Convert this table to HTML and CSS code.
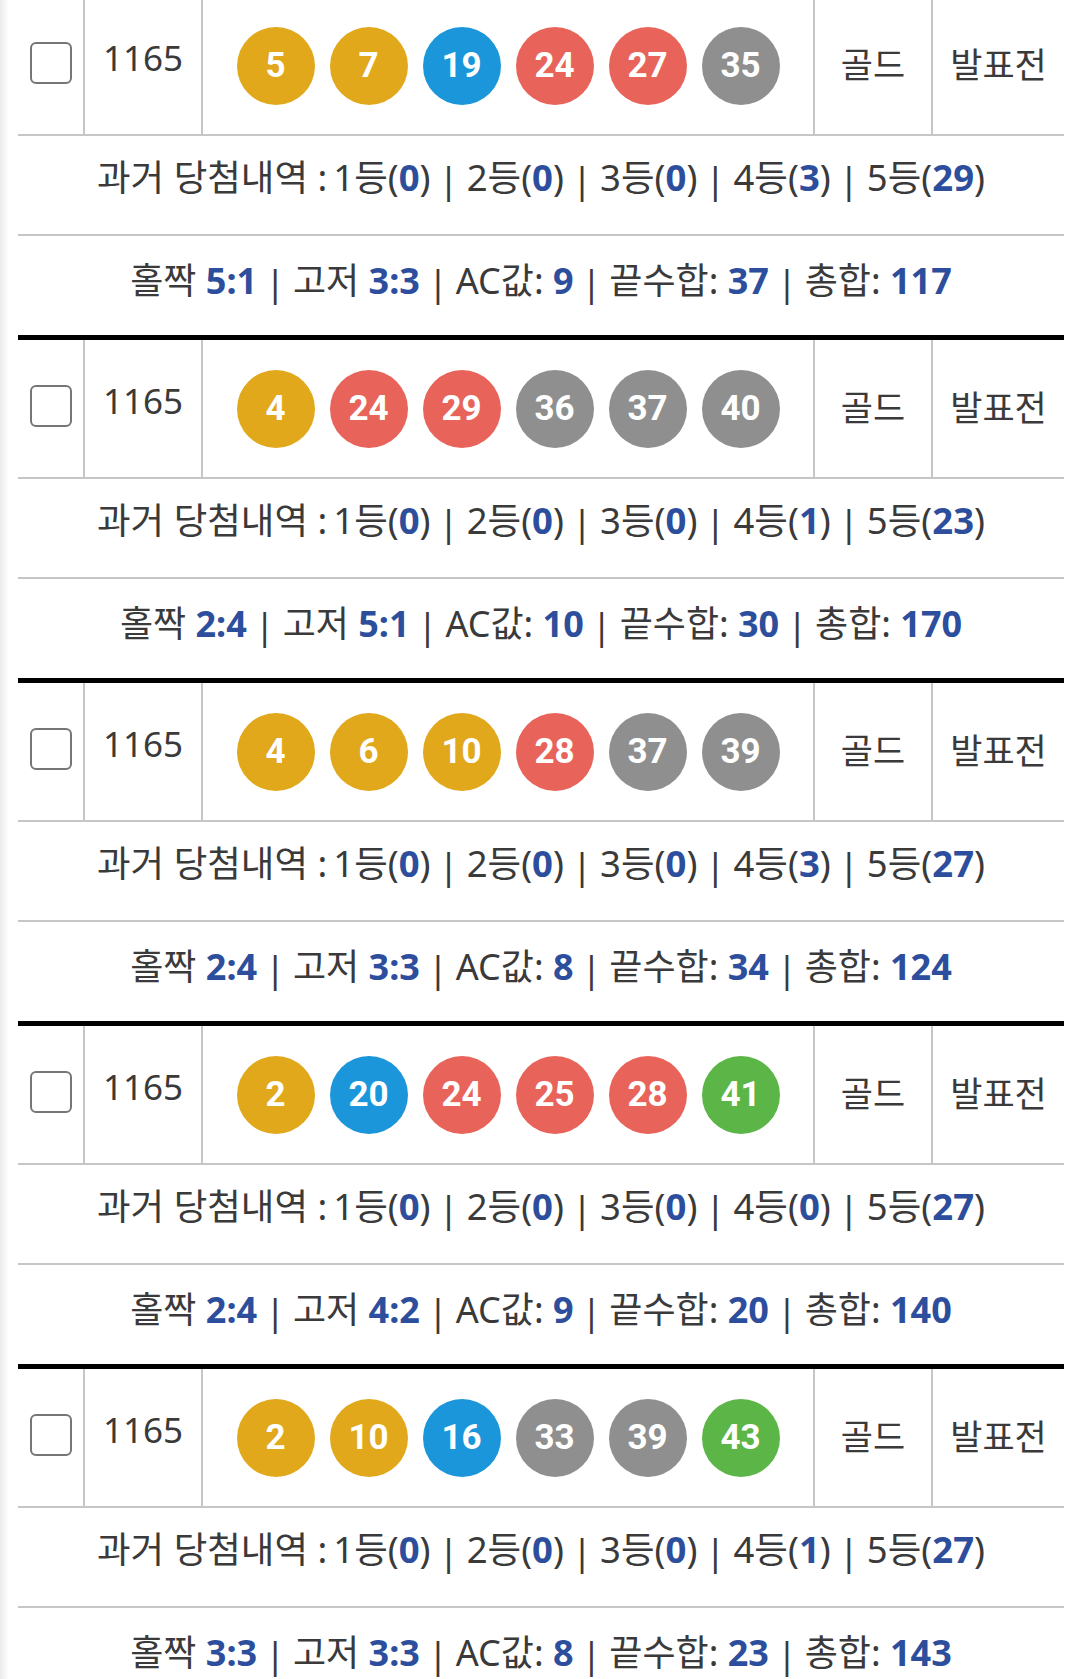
FILE: index.html
```html
<!DOCTYPE html>
<html lang="ko">
<head>
  <meta charset="UTF-8" />
  <meta name="viewport" content="width=device-width, initial-scale=1.0"/>
  <title>조합 목록</title>
  <link rel="stylesheet" href="styles.css">
</head>
<body>
  <div class="combo-list">

    <div class="combo">
      <div class="main-row">
        <div class="cell cell-check"><input type="checkbox" class="pick" /></div>
        <div class="cell cell-round">1165</div>
        <div class="cell cell-balls">
          <span class="ball yellow">5</span>
          <span class="ball yellow">7</span>
          <span class="ball blue">19</span>
          <span class="ball red">24</span>
          <span class="ball red">27</span>
          <span class="ball grey">35</span>
        </div>
        <div class="cell cell-grade"><span>골드</span></div>
        <div class="cell cell-status"><span>발표전</span></div>
      </div>
      <div class="info-row history"><p>과거 당첨내역 :&thinsp;1등(<b>0</b>)<span class="sep">|</span>2등(<b>0</b>)<span class="sep">|</span>3등(<b>0</b>)<span class="sep">|</span>4등(<b>3</b>)<span class="sep">|</span>5등(<b>29</b>)</p></div>
      <div class="info-row stats"><p>홀짝 <b>5:1</b><span class="sep">|</span>고저 <b>3:3</b><span class="sep">|</span>AC값: <b>9</b><span class="sep">|</span>끝수합: <b>37</b><span class="sep">|</span>총합: <b>117</b></p></div>
    </div>

    <div class="combo">
      <div class="main-row">
        <div class="cell cell-check"><input type="checkbox" class="pick" /></div>
        <div class="cell cell-round">1165</div>
        <div class="cell cell-balls">
          <span class="ball yellow">4</span>
          <span class="ball red">24</span>
          <span class="ball red">29</span>
          <span class="ball grey">36</span>
          <span class="ball grey">37</span>
          <span class="ball grey">40</span>
        </div>
        <div class="cell cell-grade"><span>골드</span></div>
        <div class="cell cell-status"><span>발표전</span></div>
      </div>
      <div class="info-row history"><p>과거 당첨내역 :&thinsp;1등(<b>0</b>)<span class="sep">|</span>2등(<b>0</b>)<span class="sep">|</span>3등(<b>0</b>)<span class="sep">|</span>4등(<b>1</b>)<span class="sep">|</span>5등(<b>23</b>)</p></div>
      <div class="info-row stats"><p>홀짝 <b>2:4</b><span class="sep">|</span>고저 <b>5:1</b><span class="sep">|</span>AC값: <b>10</b><span class="sep">|</span>끝수합: <b>30</b><span class="sep">|</span>총합: <b>170</b></p></div>
    </div>

    <div class="combo">
      <div class="main-row">
        <div class="cell cell-check"><input type="checkbox" class="pick" /></div>
        <div class="cell cell-round">1165</div>
        <div class="cell cell-balls">
          <span class="ball yellow">4</span>
          <span class="ball yellow">6</span>
          <span class="ball yellow">10</span>
          <span class="ball red">28</span>
          <span class="ball grey">37</span>
          <span class="ball grey">39</span>
        </div>
        <div class="cell cell-grade"><span>골드</span></div>
        <div class="cell cell-status"><span>발표전</span></div>
      </div>
      <div class="info-row history"><p>과거 당첨내역 :&thinsp;1등(<b>0</b>)<span class="sep">|</span>2등(<b>0</b>)<span class="sep">|</span>3등(<b>0</b>)<span class="sep">|</span>4등(<b>3</b>)<span class="sep">|</span>5등(<b>27</b>)</p></div>
      <div class="info-row stats"><p>홀짝 <b>2:4</b><span class="sep">|</span>고저 <b>3:3</b><span class="sep">|</span>AC값: <b>8</b><span class="sep">|</span>끝수합: <b>34</b><span class="sep">|</span>총합: <b>124</b></p></div>
    </div>

    <div class="combo">
      <div class="main-row">
        <div class="cell cell-check"><input type="checkbox" class="pick" /></div>
        <div class="cell cell-round">1165</div>
        <div class="cell cell-balls">
          <span class="ball yellow">2</span>
          <span class="ball blue">20</span>
          <span class="ball red">24</span>
          <span class="ball red">25</span>
          <span class="ball red">28</span>
          <span class="ball green">41</span>
        </div>
        <div class="cell cell-grade"><span>골드</span></div>
        <div class="cell cell-status"><span>발표전</span></div>
      </div>
      <div class="info-row history"><p>과거 당첨내역 :&thinsp;1등(<b>0</b>)<span class="sep">|</span>2등(<b>0</b>)<span class="sep">|</span>3등(<b>0</b>)<span class="sep">|</span>4등(<b>0</b>)<span class="sep">|</span>5등(<b>27</b>)</p></div>
      <div class="info-row stats"><p>홀짝 <b>2:4</b><span class="sep">|</span>고저 <b>4:2</b><span class="sep">|</span>AC값: <b>9</b><span class="sep">|</span>끝수합: <b>20</b><span class="sep">|</span>총합: <b>140</b></p></div>
    </div>

    <div class="combo">
      <div class="main-row">
        <div class="cell cell-check"><input type="checkbox" class="pick" /></div>
        <div class="cell cell-round">1165</div>
        <div class="cell cell-balls">
          <span class="ball yellow">2</span>
          <span class="ball yellow">10</span>
          <span class="ball blue">16</span>
          <span class="ball grey">33</span>
          <span class="ball grey">39</span>
          <span class="ball green">43</span>
        </div>
        <div class="cell cell-grade"><span>골드</span></div>
        <div class="cell cell-status"><span>발표전</span></div>
      </div>
      <div class="info-row history"><p>과거 당첨내역 :&thinsp;1등(<b>0</b>)<span class="sep">|</span>2등(<b>0</b>)<span class="sep">|</span>3등(<b>0</b>)<span class="sep">|</span>4등(<b>1</b>)<span class="sep">|</span>5등(<b>27</b>)</p></div>
      <div class="info-row stats"><p>홀짝 <b>3:3</b><span class="sep">|</span>고저 <b>3:3</b><span class="sep">|</span>AC값: <b>8</b><span class="sep">|</span>끝수합: <b>23</b><span class="sep">|</span>총합: <b>143</b></p></div>
    </div>

  </div>
</body>
</html>
```

FILE: styles.css
```css
* {
  box-sizing: border-box;
}

body {
  margin: 0;
  font-family: 'Noto Sans', 'Noto Sans CJK KR', sans-serif;
  color: #3a3a3a;
  background: linear-gradient(to right, #ebebeb 0, #ffffff 9px);
  min-height: 100vh;
  overflow: hidden;
}

.combo-list {
  margin: -3px 16px 0 18px;
}

.combo {
  border-top: 5px solid #000;
  background-color: #fff;
}

.combo:first-child {
  border-top: none;
}

/* top row: checkbox, round, balls, grade, status */
.main-row {
  display: grid;
  grid-template-columns: 65px 118px 612px 118px 1fr;
  height: 139px;
  border-bottom: 2px solid #c6c6c6;
}

.cell {
  display: flex;
  align-items: center;
  justify-content: center;
  border-left: 2px solid #c6c6c6;
  font-size: 35px;
}

.cell-check {
  border-left: none;
}

.pick {
  appearance: none;
  -webkit-appearance: none;
  width: 42px;
  height: 42px;
  margin: 0 0 6px 0;
  border: 2px solid #767676;
  border-radius: 6px;
  background: #fff;
}

.cell-round {
  padding-bottom: 16px;
}

.cell-grade,
.cell-status {
  padding-bottom: 6px;
}

.cell-balls {
  gap: 15px;
}

.ball {
  width: 78px;
  height: 78px;
  border-radius: 50%;
  display: flex;
  align-items: center;
  justify-content: center;
  color: #fff;
  font-family: Roboto, 'Noto Sans', sans-serif;
  font-weight: 700;
  font-size: 35px;
}

.yellow { background-color: #e2a81c; }
.blue   { background-color: #1c96da; }
.red    { background-color: #e8645a; }
.grey   { background-color: #8f8f8f; }
.green  { background-color: #5cb547; }

/* history + stats lines */
.info-row {
  display: flex;
  align-items: center;
  justify-content: center;
  font-size: 36px;
  white-space: nowrap;
  padding-bottom: 14px;
}

.info-row p {
  margin: 0;
}

.history {
  height: 100px;
  border-bottom: 2px solid #c6c6c6;
  padding-bottom: 20px;
  font-size: 36.5px;
}

.history .sep {
  margin: 0 8px;
}

.stats {
  height: 99px;
}

.info-row b {
  color: #2c4e9c;
  font-weight: 700;
}

.sep {
  margin: 0 8px;
  position: relative;
  top: 2px;
}
```
